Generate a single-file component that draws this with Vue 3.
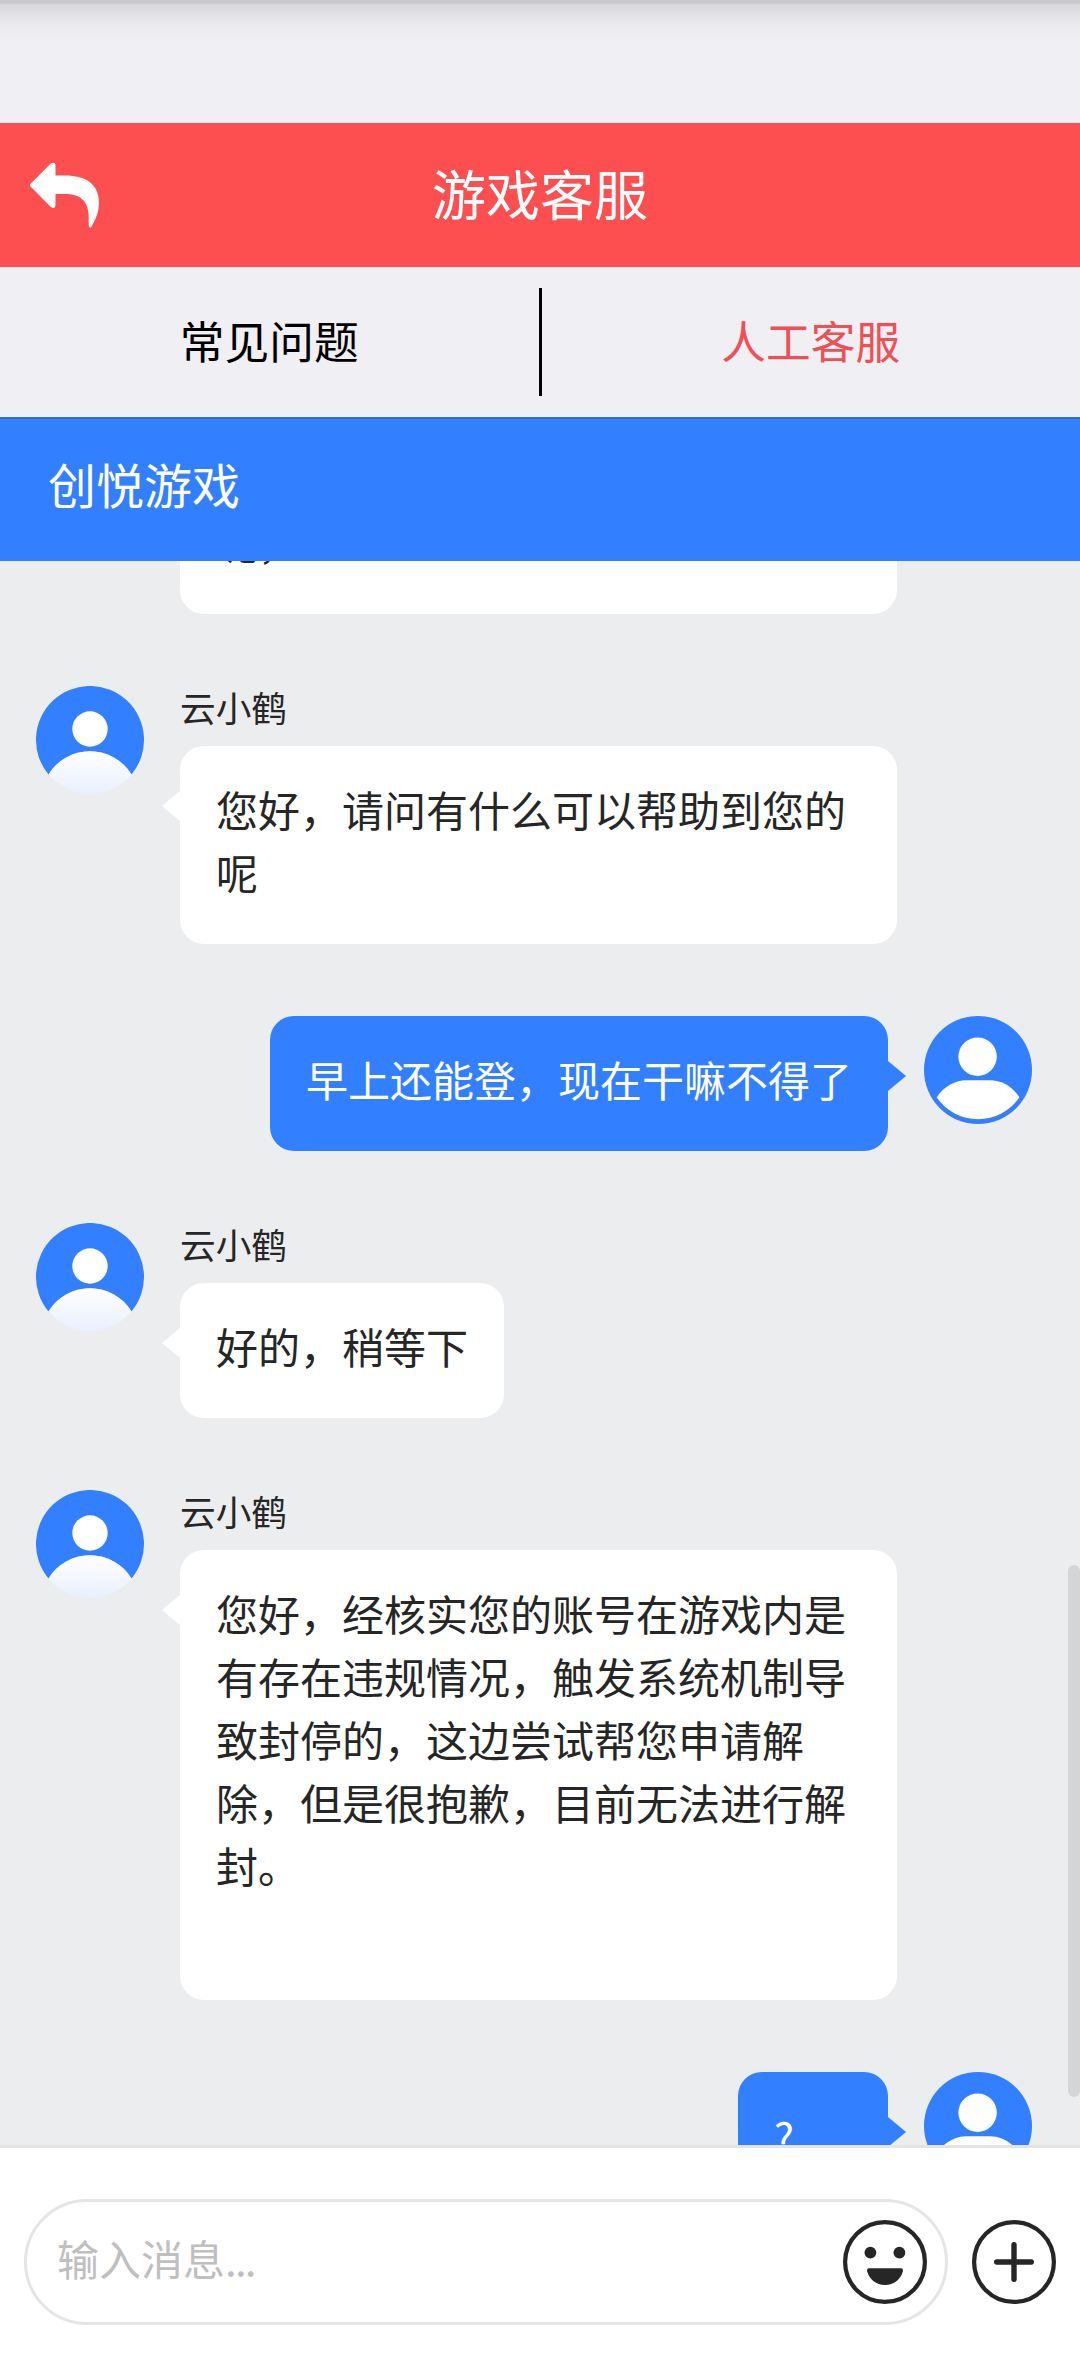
<script setup>
const previousLine = '呢，'
const messages = [
  { from: 'agent', name: '云小鹤', text: '您好，请问有什么可以帮助到您的呢' },
  { from: 'user', text: '早上还能登，现在干嘛不得了' },
  { from: 'agent', name: '云小鹤', text: '好的，稍等下' },
  { from: 'agent', name: '云小鹤', text: '您好，经核实您的账号在游戏内是有存在违规情况，触发系统机制导致封停的，这边尝试帮您申请解除，但是很抱歉，目前无法进行解封。\n\n' },
  { from: 'user', text: '?' },
]
</script>

<template>
  <div class="page">
    <div class="status"></div>
    <header class="header">
      <svg class="back" viewBox="0 0 72 66" width="72" height="66">
        <path fill="#fff" d="M.6 21.8 20.8 1.6Q25.5-1 25.5 4V13.5H35C56 13.5 69 22 69 41C69 51 65 58 61.8 64Q60 67 58.7 64V54C58.5 39 50 32 35 32H25.5V42Q25.5 48 20.8 44.9L.6 24.6Q-.8 23 .6 21.8Z" />
      </svg>
      <h1>游戏客服</h1>
    </header>
    <nav class="tabs">
      <div class="tab">常见问题</div>
      <div class="divider"></div>
      <div class="tab active">人工客服</div>
    </nav>
    <div class="brand">创悦游戏</div>

    <main class="chat">
      <div class="list">
        <div class="previous">
          <div class="bubble"><div class="text">{{ previousLine }}</div></div>
        </div>
        <div v-for="(m, i) in messages" :key="i" class="row" :class="m.from">
          <svg v-if="m.from === 'agent'" class="avatar" viewBox="0 0 108 108">
            <defs>
              <linearGradient :id="'body' + i" x1="0" y1="65" x2="0" y2="108" gradientUnits="userSpaceOnUse">
                <stop offset="0" stop-color="#fff" />
                <stop offset="1" stop-color="#e8effe" />
              </linearGradient>
            </defs>
            <path fill="#327fff" d="M12.500 88.500A54 54 0 1 1 95.500 88.500A48.700 48.700 0 0 0 12.500 88.500Z" />
            <circle cx="54" cy="43" r="17.7" fill="#fff" />
            <path :fill="`url(#body${i})`" d="M12.500 88.500A48.700 48.700 0 0 1 95.500 88.500A54 54 0 0 1 12.500 88.500Z" />
          </svg>
          <div class="body">
            <div v-if="m.name" class="name">{{ m.name }}</div>
            <div class="bubble"><div class="text">{{ m.text }}</div></div>
          </div>
          <svg v-if="m.from === 'user'" class="avatar" viewBox="0 0 108 108">
            <circle cx="54" cy="54" r="54" fill="#327fff" />
            <circle cx="53.6" cy="40.7" r="19.2" fill="#fff" />
            <path fill="#fff" d="M12.7 81.3C20 70 32 64.3 42 64.3H66C77 64.3 88 70 95.4 81.3A50 50 0 0 1 12.7 81.3Z" />
          </svg>
        </div>
      </div>
      <div class="scrollbar"></div>
    </main>

    <footer class="footer">
      <div class="input">
        <span class="placeholder">输入消息<span class="dots">...</span></span>
        <svg width="84" height="84" viewBox="0 0 84 84">
          <circle cx="42" cy="42" r="39.9" fill="none" stroke="#262626" stroke-width="4.2" />
          <circle cx="27.4" cy="32.6" r="5.9" fill="#262626" />
          <circle cx="56.4" cy="32.6" r="5.9" fill="#262626" />
          <path fill="#262626" d="M26 48.2H58Q60.5 48.5 59.8 51.5C57.5 59.5 51 65 42 65S26.500 59.5 24.200 51.500Q23.500 48.500 26 48.200Z" />
        </svg>
      </div>
      <svg class="plus" width="84" height="84" viewBox="0 0 84 84">
        <circle cx="42" cy="42" r="39.9" fill="none" stroke="#262626" stroke-width="4.2" />
        <path d="M24.700 42H59.300M42 24.700V59.300" stroke="#262626" stroke-width="5.4" stroke-linecap="round" />
      </svg>
    </footer>
  </div>
</template>

<style>
body {
  margin: 0;
}
</style>

<style scoped>
.page {
  width: 1080px;
  height: 2376px;
  display: flex;
  flex-direction: column;
  overflow: hidden;
  background: #efeff4;
  font-family: "Noto Sans CJK SC", "Noto Sans", sans-serif;
  color: #262626;
}
.status {
  flex: none;
  height: 123px;
  background: linear-gradient(#c8c8cc 0, #cacace 3px, #d8d8dc 5px, #e2e2e6 14px, #e9e9ee 24px, #efeff4 42px);
}
.header {
  flex: none;
  height: 144px;
  display: grid;
  grid-template-columns: 102px 1fr 102px;
  align-items: center;
  background: #fd4f50;
  color: #fff;
}
.back {
  margin: 0 0 0 30px;
}
h1 {
  margin: 0;
  padding-bottom: 4px;
  font-size: 54px;
  font-weight: 400;
  line-height: 80px;
  text-align: center;
}
.tabs {
  flex: none;
  height: 150px;
  display: flex;
  align-items: center;
  font-size: 44.7px;
  color: #000;
}
.tab {
  flex: 1;
  padding-bottom: 4px;
  text-align: center;
  line-height: 66px;
}
.tab.active {
  color: #f04f54;
}
.divider {
  width: 3px;
  height: 108px;
  background: #000;
}
.brand {
  flex: none;
  height: 144px;
  box-sizing: border-box;
  padding-left: 48px;
  line-height: 133px;
  font-size: 48px;
  color: #fff;
  background: linear-gradient(#2d74d2 1px, #3468b6 1px, #3468b6 2px, #327fff 2px);
}
.chat {
  flex: none;
  position: relative;
  height: 1584px;
  overflow: hidden;
  background: #ecedef;
}
.previous {
  display: flex;
  align-items: flex-end;
  height: 53px;
  margin: 0 183px 0 180px;
}
.bubble {
  position: relative;
  box-sizing: border-box;
  min-width: 150px;
  max-width: 717px;
  padding: 31px 36px 41px;
  border-radius: 24px;
  font-size: 42px;
  line-height: 63px;
  white-space: pre-wrap;
  background: #fff;
}
.previous .bubble {
  width: 717px;
}
.row {
  display: flex;
  gap: 36px;
  margin: 72px 48px 0 36px;
}
.row.user {
  justify-content: flex-end;
}
.avatar {
  flex: none;
  width: 108px;
  height: 108px;
}
.body {
  display: flex;
  flex-direction: column;
  align-items: flex-start;
}
.name {
  height: 60px;
  line-height: 41px;
  font-size: 35.7px;
}
.row .bubble::before {
  content: "";
  position: absolute;
  top: 45px;
  left: -18px;
  border: solid transparent;
  border-width: 15px 18px 15px 0;
  border-right-color: #fff;
}
.user .bubble {
  color: #fff;
  background: #327fff;
}
.row.user .bubble::before {
  left: auto;
  right: -18px;
  border-width: 15px 0 15px 18px;
  border-left-color: #327fff;
}
.scrollbar {
  position: absolute;
  right: 0;
  top: 1004px;
  width: 12px;
  height: 532px;
  border-radius: 6px;
  background: #d4d5d7;
}
.footer {
  flex: 1;
  display: flex;
  align-items: flex-start;
  gap: 24px;
  padding: 51px 24px 0;
  border-top: 3px solid #e4e4e4;
  background: #fff;
}
.input {
  flex: 1;
  box-sizing: border-box;
  height: 126px;
  display: flex;
  align-items: center;
  justify-content: space-between;
  padding: 0 18px 0 30px;
  border: 3px solid #e5e5e5;
  border-radius: 63px;
}
.placeholder {
  font-size: 42px;
  line-height: 62px;
  padding-bottom: 9px;
  color: #bfbfbf;
}
.dots {
  letter-spacing: -1.8px;
}
.plus {
  margin-top: 21px;
}
</style>
